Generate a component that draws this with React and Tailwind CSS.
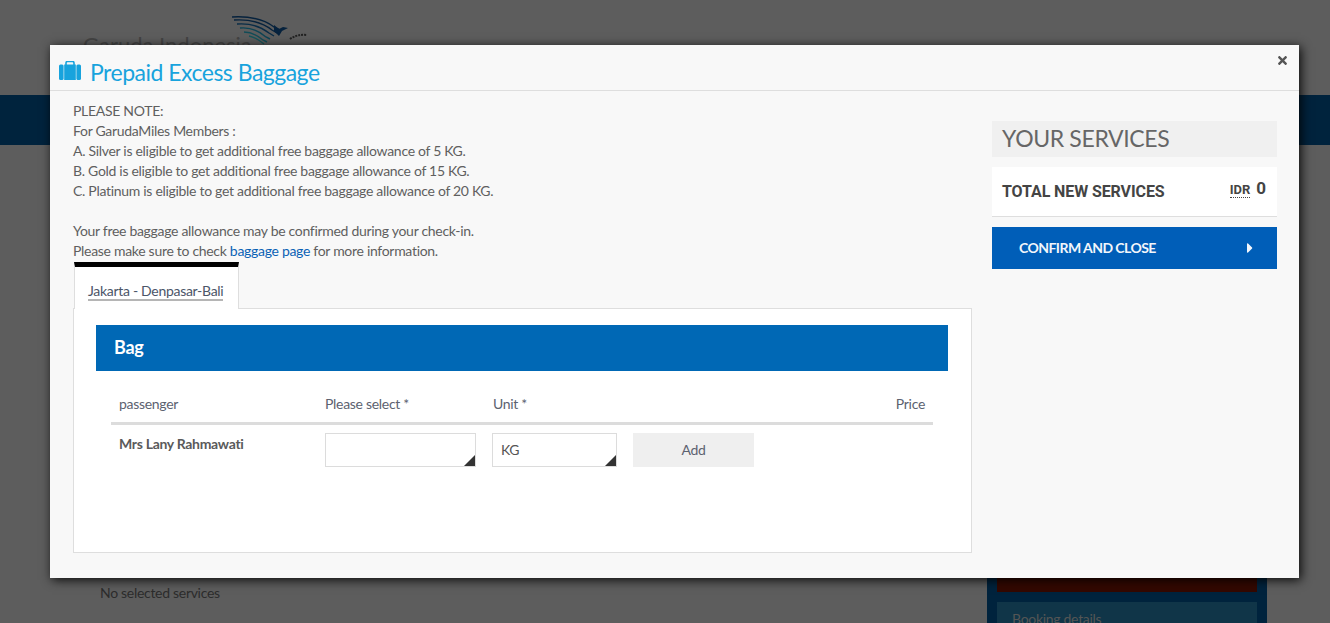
import { FaTimes, FaCaretRight } from 'react-icons/fa';

const notes = [
  'PLEASE NOTE:',
  'For GarudaMiles Members :',
  'A. Silver is eligible to get additional free baggage allowance of 5 KG.',
  'B. Gold is eligible to get additional free baggage allowance of 15 KG.',
  'C. Platinum is eligible to get additional free baggage allowance of 20 KG.',
];

const SelectBox = ({ value, width }) => (
  <div className={`relative h-[34px] ${width} border border-[#dcdcdc] bg-white pl-2 text-[14px] leading-[32px] text-[#555]`}>
    {value}
    <span className="absolute bottom-0 right-0 h-0 w-0 border-b-[11px] border-l-[11px] border-b-[#333] border-l-transparent" />
  </div>
);

const Logo = () => (
  <svg width="84" height="34" viewBox="0 0 84 34" className="absolute left-[230px] top-[15px]" fill="none">
    <path d="M2 2 C20 1 34 4 44 12 L50 15" stroke="#06223d" strokeWidth="1.4" />
    <path d="M4 5 C20 4 32 7 42 15 L47 18" stroke="#06223d" strokeWidth="1.4" />
    <path d="M7 9 C20 8 30 11 39 18 L44 21" stroke="#082c47" strokeWidth="1.4" />
    <path d="M10 13 C20 12 28 15 36 22 L40 24" stroke="#0c4455" strokeWidth="1.4" />
    <path d="M14 17 C22 17 27 20 33 25 L37 27" stroke="#124d58" strokeWidth="1.4" />
    <path d="M19 21 C25 22 29 25 34 29" stroke="#17555a" strokeWidth="1.4" />
    <path d="M44 10 L49 14 L53 12 L58 13 L52 16 L49 21 L44 16Z" fill="#06223d" />
    <path d="M60 24 Q67 19 77 20" stroke="#222" strokeWidth="2" strokeDasharray="2 1" />
  </svg>
);

const Background = () => (
  <div className="flex h-[623px] flex-col overflow-hidden bg-[#5d5d5d] font-['Lato',sans-serif]">
    <div className="relative h-[95px] shrink-0">
      <Logo />
      <p className="pl-[83px] pt-[28px] text-[22px] text-[#444]">Garuda Indonesia</p>
    </div>
    <div className="h-[50px] shrink-0 bg-[#00233d]" />
    <div className="flex flex-1 justify-between pl-[100px] pr-[63px]">
      <p className="pt-[438px] text-[14px] leading-5 tracking-[-0.3px] text-[#2c2c2c]">No selected services</p>
      <div className="w-[280px] bg-[#00233d] px-[10px] pt-[429px]">
        <div className="h-[18px] bg-[#330800]" />
        <p className="mt-[10px] h-[60px] bg-[#103548] pl-[15px] pt-[6px] text-[14px] tracking-[-0.3px] text-[#555]">Booking details</p>
      </div>
    </div>
  </div>
);

const Modal = () => (
  <div className="absolute left-[50px] top-[45px] h-[533px] w-[1249px] bg-[#f8f8f8] font-['Lato',sans-serif] tracking-[-0.3px] text-[#5f5f5f] shadow-[2px_2px_10px_rgba(0,0,0,0.9)]">
    <div className="relative flex h-[46px] items-center border-b border-[#dedede] pl-[9px] pt-[9px]">
      <svg width="22" height="19" viewBox="0 0 22 19" className="-mt-[4px] text-[#18a3dd]">
        <path d="M7 4V2a1.5 1.5 0 0 1 1.5-1.5h5A1.5 1.5 0 0 1 15 2v2" fill="none" stroke="currentColor" strokeWidth="1.6" />
        <rect y="3.5" width="4.6" height="15.5" rx="1.5" fill="currentColor" />
        <rect x="5.2" y="3.5" width="11.6" height="15.5" fill="currentColor" />
        <rect x="17.4" y="3.5" width="4.6" height="15.5" rx="1.5" fill="currentColor" />
      </svg>
      <h2 className="ml-[9px] text-[23px] leading-none tracking-[-0.5px] text-[#18a3dd]">Prepaid Excess Baggage</h2>
      <FaTimes className="absolute right-[10px] top-[9px] h-[13px] w-[13px] text-[#555]" />
    </div>

    <div className="flex pl-[23px] pr-[22px]">
      <div className="w-[899px] pt-[10px]">
        <div className="text-[14px] leading-5">
          {notes.map((line) => (
            <p key={line}>{line}</p>
          ))}
          <p className="mt-5">Your free baggage allowance may be confirmed during your check-in.</p>
          <p>
            Please make sure to check <a className="text-[#0b62b5]">baggage page</a> for more information.
          </p>
        </div>

        <div className="relative z-10 ml-px mt-[1px] h-[47px] w-[165px] border-x border-[#dedede] border-t-[5px] border-t-black bg-white pl-[13px] pt-[11px]">
          <span className="inline-block border-b-2 border-[#b5b5b5] text-[14px] leading-4 text-[#4b5568]">Jakarta - Denpasar-Bali</span>
        </div>

        <div className="-mt-px h-[245px] border border-[#dedede] bg-white pl-[22px] pr-[23px] pt-[16px]">
          <div className="flex h-[46px] items-center bg-[#0068b5] pb-[2px] pl-[18px] text-[18px] font-bold text-white">Bag</div>
          <div className="mx-[15px] mt-[23px] flex h-[31px] border-b-[3px] border-[#dcdcdc] text-[14px] leading-5 text-[#5c6270]">
            <span className="w-[214px] pl-2">passenger</span>
            <span className="w-[168px]">Please select *</span>
            <span className="flex-1">Unit *</span>
            <span className="pr-2">Price</span>
          </div>
          <div className="ml-[15px] mt-2 flex text-[14px]">
            <span className="w-[214px] pl-2 pt-[1px] font-bold leading-5 text-[#5a5a5a]">Mrs Lany Rahmawati</span>
            <SelectBox width="w-[151px]" />
            <div className="ml-[16px]">
              <SelectBox value="KG" width="w-[125px]" />
            </div>
            <button className="ml-[16px] h-[34px] w-[121px] bg-[#efefef] pb-[2px] text-[14px] text-[#5c6270]">Add</button>
          </div>
        </div>
      </div>

      <div className="ml-[20px] w-[285px] pt-[30px]">
        <h3 className="h-[36px] bg-[#f0f0f0] pl-[10px] text-[23px] leading-[34px] tracking-[-0.35px] text-[#666]">YOUR SERVICES</h3>
        <div className="mt-[10px] flex h-[50px] items-center justify-between border-b border-[#dedede] bg-white pl-[10px] pr-[11px]">
          <span className="font-['Roboto',sans-serif] text-[16px] font-bold tracking-[-0.1px] text-[#444]">TOTAL NEW SERVICES</span>
          <span className="-mt-[5px] flex items-baseline gap-[6px] font-['Roboto',sans-serif] font-bold tracking-normal text-[#444]">
            <abbr className="border-b border-dotted border-[#444] text-[13px] leading-[14px] no-underline">IDR</abbr>
            <span className="text-[17px]">0</span>
          </span>
        </div>
        <button className="relative mt-[10px] flex h-[42px] w-full items-center bg-[#005eb8] pb-[2px] pl-[27px] text-[14px] font-bold tracking-[-0.55px] text-[#f2f6fb]">
          CONFIRM AND CLOSE
          <FaCaretRight className="absolute right-[19px] top-[13px] h-4 w-4" />
        </button>
      </div>
    </div>
  </div>
);

export default function App() {
  return (
    <div className="relative h-[623px] overflow-hidden">
      <Background />
      <Modal />
    </div>
  );
}
